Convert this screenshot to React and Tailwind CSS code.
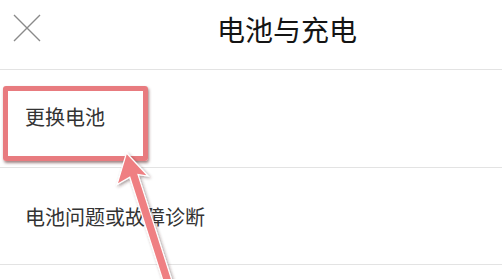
import React from "react";

export default function App() {
  const font = { fontFamily: '"Noto Sans CJK SC", "Noto Sans", sans-serif' };
  return (
    <div className="relative w-[502px] h-[279px] overflow-hidden bg-white" style={font}>
      <div className="h-[70px] border-b border-[#e3e3e3] flex items-start pt-[14px] pl-[13px]">
        <svg width="28" height="28" viewBox="0 0 28 28" className="shrink-0">
          <path d="M1 1 L27 27 M27 1 L1 27" stroke="#8a8a8a" strokeWidth="1.4" fill="none" />
        </svg>
        <div className="ml-[176px] mt-[1px] text-[28px] leading-[28px] text-[#141414]">电池与充电</div>
      </div>
      <div className="h-[98px] border-b border-[#e3e3e3] flex items-center pl-[25px]">
        <span className="text-[20px] leading-[20px] text-[#333] mt-[-4px]">更换电池</span>
      </div>
      <div className="h-[97px] border-b border-[#e3e3e3] flex items-center pl-[25px]">
        <span className="text-[20px] leading-[20px] text-[#333] mt-[2px]">电池问题或故障诊断</span>
      </div>

      <div className="absolute left-[3px] top-[86px] w-[145px] h-[75px] border-[5px] border-[#e87b7f] rounded-[3px] shadow-[1px_2px_3px_rgba(80,30,30,0.55)]" />

      <svg className="absolute left-0 top-0" width="502" height="279" viewBox="0 0 502 279">
        <defs>
          <filter id="sh" x="-50%" y="-50%" width="200%" height="200%">
            <feDropShadow dx="1.5" dy="1.5" stdDeviation="1.5" floodColor="#402020" floodOpacity="0.45" />
          </filter>
        </defs>
        <polygon
          points="126.5,153 148,176 138,174.6 173,283.7 164.8,286.3 129.8,177.2 117,184.5"
          fill="#ef7f82"
          stroke="#ffffff"
          strokeWidth="1.2"
          strokeLinejoin="miter"
          filter="url(#sh)"
        />
      </svg>
    </div>
  );
}
